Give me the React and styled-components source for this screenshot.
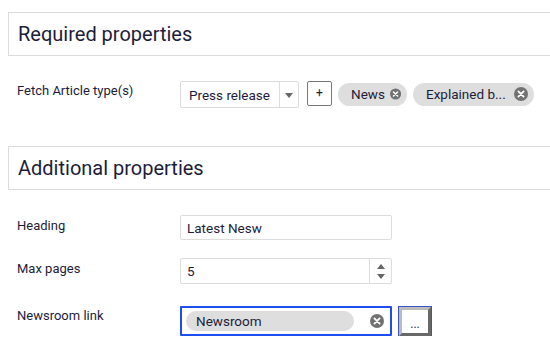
import React from "react";
import styled, { createGlobalStyle } from "styled-components";

const GlobalStyle = createGlobalStyle`
  body {
    margin: 0;
    background: #fff;
    font-family: Roboto, "Liberation Sans", sans-serif;
    color: #1d1d3a;
  }
`;

const ClearIcon = ({ size = 14 }) => (
  <svg width={size} height={size} viewBox="0 0 14 14">
    <circle cx="7" cy="7" r="7" fill="#727272" />
    <path d="M4.4 4.4l5.2 5.2M9.6 4.4l-5.2 5.2" stroke="#fff" strokeWidth="1.8" strokeLinecap="round" />
  </svg>
);

const App = () => {
  return (
    <Page>
      <GlobalStyle />
      <SectionHeader>Required properties</SectionHeader>
      <Row top={24} labelTop={3}>
        <Label>Fetch Article type(s)</Label>
        <Controls>
          <Select>
            <SelectValue>Press release</SelectValue>
            <SelectArrow>
              <svg width="8" height="5" viewBox="0 0 8 5">
                <path d="M0 0h8L4 5z" fill="#666" />
              </svg>
            </SelectArrow>
          </Select>
          <PlusButton>+</PlusButton>
          <Chip>
            News <ClearIcon />
          </Chip>
          <Chip wide>
            Explained b... <ClearIcon />
          </Chip>
        </Controls>
      </Row>

      <SectionHeader top={38}>Additional properties</SectionHeader>
      <Row top={25} labelTop={3}>
        <Label>Heading</Label>
        <TextBox>Latest Nesw</TextBox>
      </Row>
      <Row top={18} labelTop={3}>
        <Label>Max pages</Label>
        <NumberBox>
          <NumberValue>5</NumberValue>
          <Spinner>
            <svg width="8" height="5" viewBox="0 0 8 5">
              <path d="M0 5h8L4 0z" fill="#666" />
            </svg>
            <svg width="8" height="5" viewBox="0 0 8 5">
              <path d="M0 0h8L4 5z" fill="#666" />
            </svg>
          </Spinner>
        </NumberBox>
      </Row>
      <Row top={22} labelTop={2}>
        <Label>Newsroom link</Label>
        <Controls>
          <LinkBox>
            <LinkChip>Newsroom</LinkChip>
            <ClearIcon />
          </LinkBox>
          <DotsButton>...</DotsButton>
        </Controls>
      </Row>
    </Page>
  );
};
export default App;

const Page = styled.div`
  padding-left: 8px;
  padding-top: 12px;
`;

const SectionHeader = styled.div`
  margin-top: ${(props) => props.top || 0}px;
  height: 42px;
  border: 1px solid #dcdcdc;
  border-right: none;
  display: flex;
  align-items: center;
  padding-left: 9px;
  font-size: 20px;
  color: #1d1d3a;
`;

const Row = styled.div`
  display: flex;
  align-items: flex-start;
  margin-top: ${(props) => props.top}px;

  & > p {
    padding-top: ${(props) => props.labelTop}px;
  }
`;

const Label = styled.p`
  margin: 0;
  width: 163px;
  padding-left: 9px;
  font-size: 13px;
  color: #1d1d3a;
`;

const Controls = styled.div`
  display: flex;
  align-items: center;
  gap: 6px;
`;

const Select = styled.div`
  display: flex;
  width: 117px;
  height: 25px;
  border: 1px solid #dcdcdc;
  border-radius: 2px;
  margin-top: 1px;
`;

const SelectValue = styled.div`
  flex: 1;
  display: flex;
  align-items: center;
  padding-left: 8px;
  font-size: 13.5px;
  border-right: 1px solid #dcdcdc;
`;

const SelectArrow = styled.div`
  width: 18px;
  display: flex;
  align-items: center;
  justify-content: center;
  padding-top: 2px;
`;

const PlusButton = styled.div`
  width: 23px;
  height: 23px;
  margin-left: 2px;
  border: 1px solid #777;
  border-radius: 2px;
  display: flex;
  align-items: center;
  justify-content: center;
  font-size: 12px;
  margin-top: -2px;
`;

const Chip = styled.div`
  display: flex;
  align-items: center;
  justify-content: space-between;
  gap: 5px;
  height: 23px;
  width: ${(props) => (props.wide ? 121 : 69)}px;
  box-sizing: border-box;
  padding: 0 6px 0 13px;
  background: #dedede;
  border-radius: 12px;
  font-size: 13.5px;
  color: #1d1d3a;
`;

const TextBox = styled.div`
  width: 210px;
  height: 23px;
  border: 1px solid #dcdcdc;
  border-radius: 2px;
  display: flex;
  align-items: center;
  font-size: 13.5px;
  text-indent: 6px;
`;

const NumberBox = styled.div`
  display: flex;
  width: 210px;
  height: 24px;
  border: 1px solid #dcdcdc;
  border-radius: 2px;
`;

const NumberValue = styled.div`
  flex: 1;
  display: flex;
  align-items: center;
  padding-left: 6px;
  font-size: 13.5px;
  border-right: 1px solid #dcdcdc;
`;

const Spinner = styled.div`
  width: 21px;
  display: flex;
  flex-direction: column;
  align-items: center;
  justify-content: center;
  gap: 5px;
`;

const LinkBox = styled.div`
  width: 198px;
  height: 26px;
  border: 2px solid #1f4ef0;
  border-radius: 1px;
  display: flex;
  align-items: center;
  justify-content: space-between;
  padding: 0 6px 0 4px;
`;

const LinkChip = styled.div`
  width: 158px;
  height: 20px;
  background: #dedede;
  border-radius: 10px;
  display: flex;
  align-items: center;
  padding-left: 10px;
  font-size: 13.5px;
`;

const DotsButton = styled.div`
  width: 26px;
  height: 23px;
  margin-left: 1px;
  border: 3px outset #bcbcbc;
  outline: 1px solid #3a54c8;
  background: #fff;
  display: flex;
  align-items: flex-end;
  justify-content: center;
  font-size: 12px;
  line-height: 18px;
`;
